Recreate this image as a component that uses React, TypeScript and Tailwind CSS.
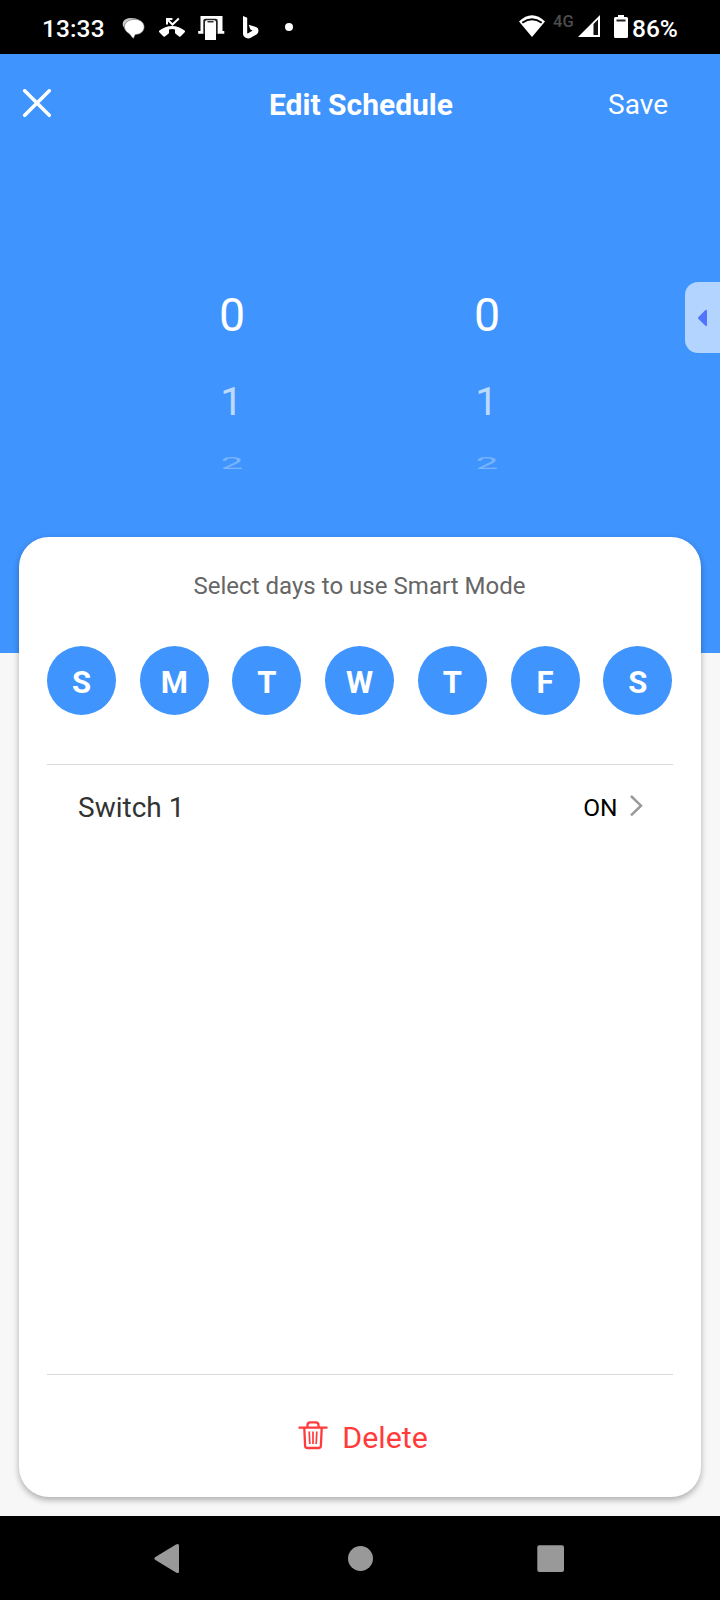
const days = ["S", "M", "T", "W", "T", "F", "S"];

function StatusBar() {
  return (
    <div className="flex h-[54px] shrink-0 items-start bg-black text-[24.5px] font-medium leading-[57px] text-white">
      <span className="ml-[42px] w-[64px] whitespace-nowrap tracking-[0.1px]">13:33</span>
      <svg className="h-[54px] w-[190px]" viewBox="106 0 190 54" fill="#fff">
        <path d="M125 29c-5-5.500-1.500-11 6-11c3.500 0 6.500.8 8.500 2.500z" fill="#ccc" />
        <path d="M134.500 19.300c5.700 0 9.700 3.200 9.700 7.600c0 4.200-3.600 7.300-8.200 7.600c-1.400.1-1.200 1.800-2.600 4c-2-1.500-2.300-3-4.200-4.800c-2.500-1.500-4.800-3.700-4.800-6.800c0-4.400 4.400-7.600 10.100-7.600z" stroke="#555" strokeWidth=".6" />
        <path d="M159.300 32.300c-.5-.6-.4-1.200.1-1.700c7-6.300 18.200-6.300 25.200 0c.5.500.6 1.100.1 1.700l-3.900 4c-.5.500-1.100.5-1.700.1l-3.500-2.600c-.4-.3-.6-.7-.6-1.200v-3c-2-.7-4-.7-6 0v3c0 .5-.2.900-.6 1.200l-3.500 2.600c-.6.400-1.200.4-1.700-.1z" />
        <path d="M167 24.500v-5.400h5.400M167.500 19.500l5 5l6.300-6" fill="none" stroke="#fff" strokeWidth="2" />
        <path d="M200.500 16h22v15h1.800v2.700H198.200V31h2.300z" />
        <path d="M203.300 20.700q0-1.900 1.900-1.900h10.600q1.900 0 1.900 1.900V34h-14.400z" fill="#222" />
        <path d="M205 22q0-1.800 1.800-1.800h7.400q1.800 0 1.800 1.800V40h-11z" />
        <path d="M207.500 21h6v1.500h-6z" fill="#333" />
        <path d="M243 16l4.200 1.700V32.800q0 1 1 .5l4.400-2.800l-2.200-1.100l-1.700-4.600l7.300 2.300q2.500.9 2.500 3.600q0 2.400-2 3.700l-5.800 3.400q-2.200 1.100-4.500.1l-1.700-1q-1.500-1-1.500-2.800z" />
        <circle cx="289" cy="27" r="4" />
      </svg>
      <div className="flex-1" />
      <svg className="h-[54px] w-[34px]" viewBox="519 0 34 54" fill="#fff">
        <path d="M519 21.500q13-12.500 26 0L532 37z" />
        <path d="M522.300 22.800q9.700-7 19.400 0" fill="none" stroke="#000" strokeWidth="2" />
      </svg>
      <span className="w-[23px] text-[16.500px] leading-[43px] text-[#4d4d4d]">4G</span>
      <svg className="h-[54px] w-[56px]" viewBox="576 0 56 54" fill="#fff">
        <path d="M578 37L600 15v22z" />
        <path d="M593.500 24l4.500-4.500v15.500h-4.500z" fill="#111" />
        <path d="M618 15h6v2h2.500q1.500 0 1.500 1.500v18q0 1.500-1.500 1.500h-11q-1.500 0-1.500-1.500v-18q0-1.500 1.500-1.500h2.500z" />
        <path d="M616.500 19.500h9v2h-9z" fill="#222" />
      </svg>
      <span className="w-[88px] whitespace-nowrap">86%</span>
    </div>
  );
}

function TimeColumn() {
  return (
    <div className="flex w-[255px] flex-col items-center text-white">
      <span className="h-[91px] text-[46.500px] leading-[93px]">0</span>
      <span className="h-[80px] scale-y-[0.95] pr-px text-[40px] leading-[85px] opacity-65">1</span>
      <span className="h-[44px] scale-y-[0.43] text-[40px] leading-[51px] opacity-30">2</span>
    </div>
  );
}

export default function App() {
  return (
    <div className="flex h-[1600px] w-[720px] flex-col overflow-hidden bg-[#f7f7f7] font-['Roboto',sans-serif]">
      <StatusBar />
      <header className="flex h-[100px] shrink-0 items-center bg-[#3f94fd] text-white">
        <div className="w-[201px] pl-[22px]">
          <svg className="h-[30px] w-[30px]" viewBox="0 0 30 30" fill="none" stroke="#fff" strokeWidth="3.500" strokeLinecap="round">
            <path d="M2.700 1.700l24.600 24.600M27.300 1.700l-24.600 24.600" />
          </svg>
        </div>
        <h1 className="flex-1 whitespace-nowrap text-center text-[30px] font-bold">Edit Schedule</h1>
        <button className="w-[199px] pr-[52px] pt-[2px] text-right text-[28px]">Save</button>
      </header>
      <section className="relative h-[499px] shrink-0 bg-[#3f94fd]">
        <div className="flex justify-center pr-px pt-[115px]">
          <TimeColumn />
          <TimeColumn />
        </div>
        <div className="absolute right-0 top-[128px] flex h-[71px] w-[35px] items-center rounded-l-[13px] bg-[#b2d4fe] pl-[12px]">
          <svg className="h-[18px] w-[12px]" viewBox="0 0 12 18" fill="#5074fb">
            <path d="M1.300 8.200L8.200 1.200Q10 0 10 2V15.800Q10 18 8.200 16.600L1.300 9.800Q.6 9 1.300 8.200z" />
          </svg>
        </div>
      </section>
      <main className="relative mx-[19px] -mt-[116px] flex h-[960px] shrink-0 flex-col rounded-[30px] bg-white px-[28px] shadow-[0_3px_6px_rgba(0,0,0,0.3)]">
        <p className="h-[109px] whitespace-nowrap pr-px text-center text-[24px] leading-[99px] tracking-[0.03px] text-[#666]">Select days to use Smart Mode</p>
        <div className="flex h-[119px] items-start justify-between border-b border-[#d9d9d9] pr-[0.78px]">
          {days.map((day, i) => (
            <span key={i} className="h-[69px] w-[69px] rounded-full bg-[#3f94fd] text-center text-[31px] font-bold leading-[73px] text-white">
              {day}
            </span>
          ))}
        </div>
        <div className="flex h-[86px] items-center pl-[31px] pr-[29px]">
          <span className="flex-1 text-[28px] text-[#333]">Switch 1</span>
          <span className="text-[24.500px] text-black">ON</span>
          <svg className="-mt-[5px] ml-[11.5px] h-[24px] w-[15px]" viewBox="0 0 15 24" fill="none" stroke="#999" strokeWidth="2.500">
            <path d="M2 2l10 9.700l-10 9.700" />
          </svg>
        </div>
        <div className="flex-1" />
        <button className="flex h-[123px] items-center justify-center border-t border-[#d9d9d9] pl-[6px] text-[30.400px] text-[#ff3b3b]">
          <svg className="-mt-[2px] mr-[14px] h-[30px] w-[30px]" viewBox="298 1420 30 30" fill="none" stroke="currentColor" strokeWidth="2.300">
            <path d="M298.500 1427.700h29M307.500 1427.500v-2.500q0-2.700 2.700-2.700h5.600q2.700 0 2.700 2.700v2.500M304.300 1428l.8 17.800q.1 2.200 2 2.200h11.800q1.900 0 2-2.200l.8-17.800" />
            <path d="M309.200 1431.500l.6 12.500M313 1431.500v12.500M316.800 1431.500l-.6 12.500" strokeWidth="1.700" />
          </svg>
          <span className="pt-[4px]">Delete</span>
        </button>
      </main>
      <nav className="mt-[19px] h-[84px] bg-black">
        <svg className="h-[84px] w-[720px]" viewBox="0 0 720 84" fill="#999">
          <path d="M155 41.200L176 28.500Q179 27 179 29.500V55.500Q179 58 176 56.500L155 43.800Q153.500 42.500 155 41.200z" />
          <circle cx="360.500" cy="42.500" r="12.500" />
          <rect x="537.300" y="29.300" width="26.700" height="26.700" rx="2" />
        </svg>
      </nav>
    </div>
  );
}
